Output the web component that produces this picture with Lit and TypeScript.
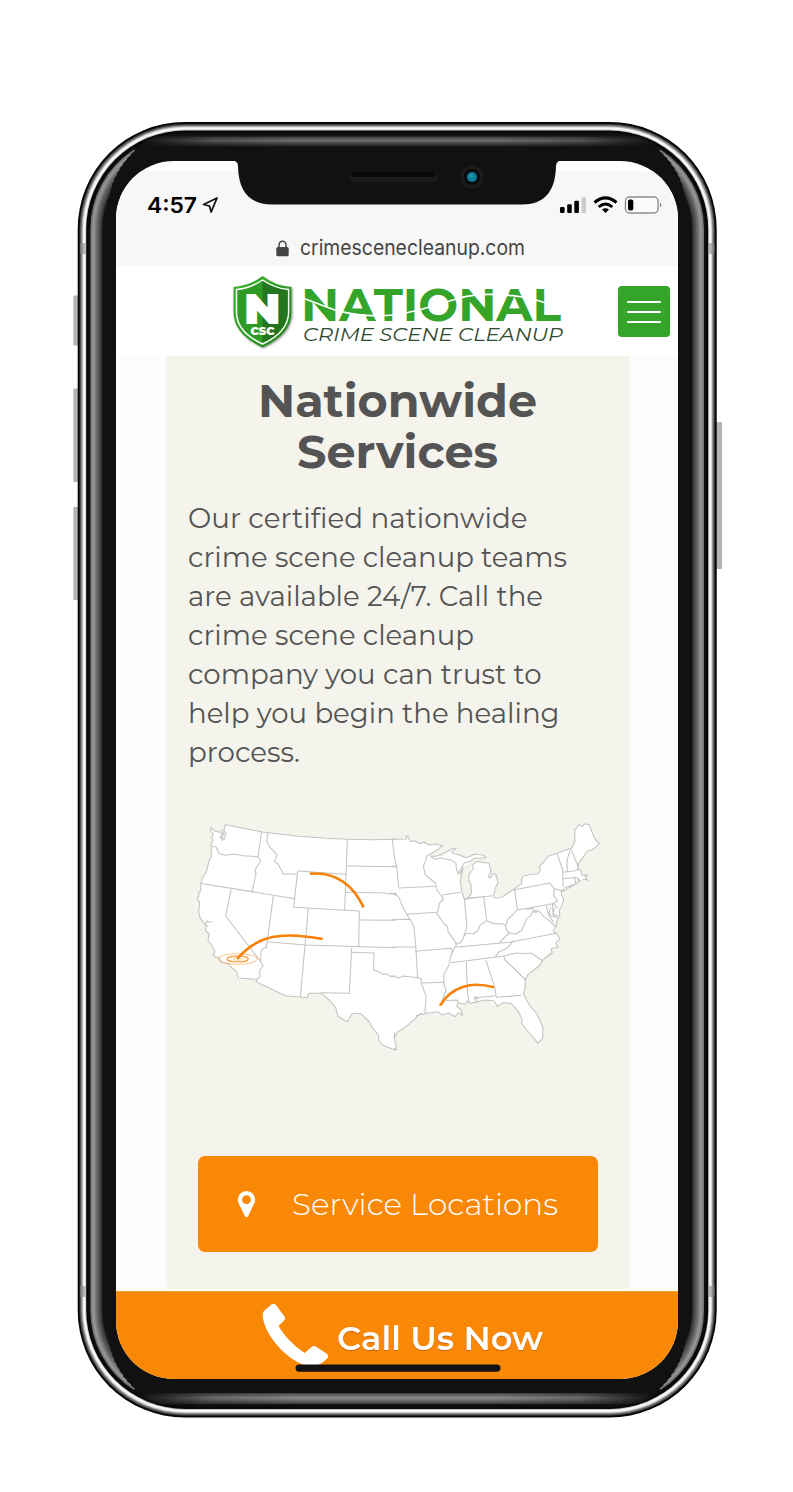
import { LitElement, html, svg, css } from "lit";
import { customElement, property } from "lit/decorators.js";

/** One line of real text, fitted to a given measure. */
@customElement("fit-text")
class FitText extends LitElement {
  @property() text = "";
  @property({ type: Number }) measure = 100;
  @property({ type: Number }) line = 20;
  @property({ type: Number }) base = 16;
  static styles = css`
    :host { display: block; font-variant-ligatures: none; }
    svg { display: block; overflow: visible; }
    text { fill: currentColor; }
  `;
  render() {
    return html`<svg width=${this.measure} height=${this.line}>
      <text x="0" y=${this.base} textLength=${this.measure} lengthAdjust="spacingAndGlyphs">${this.text}</text>
    </svg>`;
  }
}

const ring = (inset: number, color: string) => {
  const r = 107 - inset * 0.96;
  return svg`<rect x=${77.7 + inset} y=${122 + inset} width=${639 - inset * 2} height=${1295.5 - inset * 2} rx=${r} ry=${r} fill=${color}></rect>`;
};

const bezel: [number, string][] = [
  [0, "#050505"], [1.7, "#333"], [2.7, "#6a6a6a"], [3.8, "#999"], [4.8, "#ddd"], [5.8, "#fafafa"],
  [7.6, "#c8c8c8"], [8.5, "#080808"], [11, "#111"],
];
// Highlights on the glass edge, from the inside outwards.
const glow: [number, string][] = [
  [24, "#222"], [23, "#3b3b3b"], [21.8, "#494949"], [20.6, "#585858"], [19.4, "#666"],
  [18.2, "#747474"], [17, "#858585"], [15.8, "#939393"], [14.6, "#999"], [13.6, "#777"],
];
const sideGlow = (d: number, c: string) => {
  const R = 107 - d;
  const a = ((57 - (d - 13.6) * 3.2) * Math.PI) / 180;
  const dx = R * Math.cos(a), dy = R * Math.sin(a);
  const l = 77.7 + d, r = 716.7 - d;
  const cl = 184.7, cr = 609.7, ct = 229, cb = 1310.5;
  return svg`<path d="M${cl - dx} ${ct - dy} A${R} ${R} 0 0 0 ${l} ${ct} V${cb} A${R} ${R} 0 0 0 ${cl - dx} ${cb + dy}
    M${cr + dx} ${ct - dy} A${R} ${R} 0 0 1 ${r} ${ct} V${cb} A${R} ${R} 0 0 1 ${cr + dx} ${cb + dy}" stroke=${c}></path>`;
};

const frame = svg`
  <g fill="#b5b5b5">
    <rect x="73.3" y="295.5" width="6" height="50" rx="1"></rect>
    <rect x="73.3" y="388.5" width="6" height="93.5" rx="1"></rect>
    <rect x="73.3" y="507" width="6" height="93" rx="1"></rect>
    <rect x="716" y="422" width="6" height="147" rx="1"></rect>
  </g>
  ${bezel.map(([i, c]) => ring(i, c))}
  <g fill="#888" opacity=".6">
    <rect x="80" y="243" width="5.500" height="11"></rect><rect x="709" y="243" width="5.500" height="11"></rect>
    <rect x="80" y="1286" width="5.500" height="11"></rect><rect x="709" y="1286" width="5.500" height="11"></rect>
  </g>
  <rect x="140" y="136.500" width="514" height="10" fill="url(#top)" mask="url(#ends)"></rect>
  <rect x="140" y="1393" width="514" height="11" fill="url(#bottom)" mask="url(#ends)"></rect>
  <g fill="none" stroke-width="1.800" stroke-linecap="round">${glow.map(([d, c]) => sideGlow(d, c))}</g>
`;

const westFill = "M75 52 L95 68 110 71 107 84 114 89 120 72 114 60 118 44 230 66 330 78 420 85 484 88 560 89 628 87 628 720 605 712 588 704 578 690 577 674 562 658 550 636 527 613 498 612 492 622 484 635 456 619 449 592 430 570 406 550 368 550 364 563 298 557 210 515 213 508 157 504 152 485 130 463 108 458 100 443 86 440 87 424 66 390 69 372 57 360 58 344 43 326 38 304 41 280 33 262 42 246 44 220 62 184 76 140 78 95Z";
const westLines = [
  "M75 52 L88 64 103 67 111 72 107 83 114 89 120 72 114 60 118 44 230 66 330 78 420 85 484 88 560 89 630 88",
  "M75 52 L73 62 82 72 77 84 81 91 75 105 76 140 68 155 62 184 49 205 44 220 45 235 42 246 37 251 39 259 33 262 41 280 38 304 43 326 58 344 60 352 57 360 69 372 66 390 74 402 87 424 82 434 86 440 100 443 108 458 119 459 130 463 137 474 152 485 157 504 213 508 210 515 298 557 364 563 368 550 406 550 430 570 449 592 456 619 484 635 492 622 498 612 510 610 527 613 550 636 562 658 577 674 578 690 588 704 605 712 630 721",
  "M76 109 L90 111 100 131 118 136 145 132 170 137 216 140",
  "M227 65 L216 140 224 153 207 181 210 192 198 247",
  "M44 220 L326 266",
  "M135 238 L119 318 224 455",
  "M262 258 L241 412 230 416 225 426 224 455 231 467 220 484 222 499 213 508",
  "M246 68 L242 94 253 113 273 134 265 155 276 162 293 193 316 191 332 194",
  "M335 183 L323 292 520 303", "M335 183 L480 193", "M484 88 L478 246 476 301",
  "M484 168 L630 170", "M478 247 L598 249 607 253 615 249 630 254",
  "M367 296 L343 561", "M244 395 L359 405 630 413", "M520 303 L518 412", "M520 330 L630 331",
  "M497 413 L490 550 404 548", "M496 427 L564 429 563 479 580 486 590 493 602 491 612 499 630 498",
  "M66 332 L57 340 65 350 M60 337 L80 335", "M106 58 L113 70 101 83 M102 79 L110 92", "M626 665 L624 687",
];
const eastFill = "M0 88 L45 87 49 78 58 94 90 98 112 104 155 107 118 135 130 142 155 137 184 117 193 117 188 130 221 145 262 130 285 141 239 153 208 178 206 193 211 175 208 248 220 268 240 260 240 225 232 205 240 175 256 154 294 160 300 186 291 202 306 191 321 218 307 260 330 263 365 240 392 220 397 198 440 192 448 180 447 167 472 139 543 113 554 93 552 60 564 44 594 44 607 80 625 100 600 121 578 140 563 160 568 184 575 199 590 208 568 212 525 240 516 245 516 285 505 300 499 330 490 345 497 370 505 388 493 414 470 430 450 453 411 493 401 510 398 545 405 568 436 612 456 652 455 685 440 698 407 660 390 637 388 605 360 580 335 578 320 589 295 573 258 572 235 580 210 580 197 590 209 605 197 619 175 609 153 615 105 610 70 628 45 650 20 666 10 684 17 718 0 715Z";
const eastLines = [
  "M0 88 L46 87 46 78 51 80 58 94 72 93 88 101 99 96 115 105 132 102 155 107 139 120 107 139 105 151 97 168 103 195 133 219 138 240 158 267 145 280 142 299 137 310 160 342 170 351 171 364 193 397 196 405 181 431 174 465 159 493 158 519 165 540 153 573",
  "M118 138 L134 139 154 132 184 116 194 116 182 128 190 131 204 134 226 143 253 132 278 136 285 142 268 145 252 144 239 153 220 158 207 181 203 193 196 177 195 160 182 151 148 144 132 148 118 138",
  "M206 193 L216 173 208 211 212 242 220 268 232 263 242 248 240 225 232 208 235 192 246 177 246 163 256 154 294 160 298 175 300 186 291 202 298 203 306 191 315 193 321 218 313 234 307 260 316 264 330 263 365 240 392 220 391 207 397 198 422 193 440 192 448 180 445 169 455 159 472 139 498 130 543 113 552 93 551 61 564 44 574 49 581 41 594 44 607 76 614 90 625 100 615 111 600 121 588 124 578 140 562 160 560 179 570 182 572 195 584 194 588 208 573 209",
  "M568 211 L558 219 525 239 511 246 520 234 550 223",
  "M510 242 L512 256 518 267 512 287 504 302 507 315 498 333 496 348 486 364 497 370 507 388 494 398 501 412 480 416 484 429 459 447 445 468 411 493 402 511 404 531 397 550 405 568 421 593 438 612 456 652 455 685 440 700 430 686 407 660 391 639 394 628 378 600 360 580 335 578 320 589 307 572 280 570 258 576 251 568 253 560 261 569",
  "M260 576 L235 580 229 573 222 582 202 579 197 590 211 600 215 616 202 609 192 620 172 609 153 615 140 606 105 610 84 615 70 628 45 650 20 666 10 684 17 718 M93 610 L75 618 M17 718 L10 716 14 721",
  "M4 88 L10 140 18 175 23 233 M0 168 L17 168", "M24 234 L134 229", "M0 249 L22 259 35 290 47 313 137 307 M0 252 L18 250",
  "M47 313 L58 331", "M0 329 L57 328 69 350 75 418 M0 411 L75 411", "M73 424 L180 415 186 430", "M75 418 L80 503 91 506 91 519 105 559 102 610",
  "M0 498 L24 503 39 498 80 503", "M92 519 L160 517", "M157 572 L200 570 202 580",
  "M154 255 L208 247", "M220 268 L228 349 218 381 209 399 195 399", "M220 268 L278 260 M235 264 L304 257",
  "M278 260 L287 332 268 345 261 360 247 372 228 370 218 379", "M287 332 L308 341 333 341 344 346 350 329 370 310 379 296 371 239",
  "M344 346 L347 361 355 369 325 398", "M355 369 L374 372 393 360 407 326 419 317 426 304 442 302 M407 299 L424 295 430 307 442 305",
  "M371 239 L476 219 490 236 513 242 M379 300 L486 281 502 295", "M490 236 L488 257 500 273 486 281",
  "M442 302 L450 310 459 320",
  "M196 411 L225 409 355 397 496 370", "M367 392 L350 413 323 427 313 440", "M180 458 L338 438 375 429 405 431 421 429 456 453",
  "M338 438 L342 450 380 486 404 510", "M284 449 L311 530 316 562 391 556 M250 564 L313 557", "M226 456 L229 538 234 579",
  "M498 130 L515 180 516 230 M515 187 L548 183 566 176 M515 207 L554 202 569 213", "M529 186 L528 151 537 121 M539 115 L562 171",
  "M551 201 L554 221 M562 203 L562 213", "M484 280 L487 321 502 316 M492 293 L486 308 499 325 M480 293 L474 308 482 321 M466 288 L474 318 489 337 M459 320 L475 332 493 350",
  "M583 207 L592 212 M590 194 L582 202",
];

const map = html`<svg class="map" viewBox="0 0 660 750" width="220" height="250">
  <g fill="#fff"><path d=${westFill}></path><path transform="translate(615)" d=${eastFill}></path></g>
  <g fill="none" stroke="#c3c3c2" stroke-width="3.200" stroke-linejoin="round">
    ${westLines.map((d) => svg`<path d=${d}></path>`)}
    <g transform="translate(615)">${eastLines.map((d) => svg`<path d=${d}></path>`)}</g>
  </g>
  <g fill="none" stroke="#f98806">
    <ellipse cx="155" cy="447" rx="59" ry="16" stroke-width="3" opacity=".45"></ellipse>
    <ellipse cx="155" cy="447" rx="32" ry="9" stroke-width="3.500" opacity=".85"></ellipse>
    <ellipse cx="155" cy="447" rx="14" ry="4" stroke-width="2.500" opacity=".5"></ellipse>
    <g stroke-width="7.600" stroke="#f98006">
      <path d="M371 191 C448 184 500 223 533 292"></path>
      <path d="M153 447 C216 374 288 364 410 387"></path>
      <path d="M762 587 C796 530 855 513 924 532"></path>
    </g>
  </g>
</svg>`;

const lines: [string, number][] = [
  ["Our certified nationwide", 339.5], ["crime scene cleanup teams", 379], ["are available 24/7. Call the", 355],
  ["crime scene cleanup", 286], ["company you can trust to", 353.5], ["help you begin the healing", 371.5], ["process.", 112],
];

@customElement("app-root")
class AppRoot extends LitElement {
  static styles = css`
    :host { display: block; position: relative; width: 793px; height: 1492px; background: #fff; overflow: hidden;
      font-family: Montserrat, Inter, "Open Sans", sans-serif; color: #545454; }
    svg { display: block; }
    .frame, .notch { position: absolute; left: 0; top: 0; pointer-events: none; }
    .screen { position: relative; box-sizing: border-box; margin: 160.5px 0 0 116px; width: 562px; height: 1218.5px;
      border-radius: 58px; overflow: hidden; background: #fff; display: flex; flex-direction: column; }
    .wrap { display: flow-root; }
    .browser { margin-top: 10px; height: 95.5px; background: #f7f7f7; flex: none; }
    .status { display: flex; align-items: center; height: 65px; padding: 3px 15px 0 31px; box-sizing: border-box; }
    .clock { color: #000; font: 600 22px Inter, sans-serif; }
    .arrow { margin-left: 5px; }
    .signals { margin-left: auto; }
    .address { display: flex; align-items: center; padding-left: 160px; gap: 11px; color: #454545; font: 400 21px Inter, sans-serif; }
    header { height: 90px; flex: none; display: flex; background: #fff; }
    .shield { margin: 8px 0 0 116px; }
    .brand { margin: 17px 0 0 8px; width: 262px; }
    .name { position: relative; height: 42px; }
    .name fit-text { color: #35a42b; font-size: 45.5px; font-weight: 700; margin-left: -2px; }
    .cut { position: absolute; left: 0; top: 0; }
    .tag { color: #304a32; font-size: 19.5px; font-style: italic; }
    .menu { margin: 20px 0 0 53px; width: 52px; height: 51px; border-radius: 4px; background: #35a42b; display: flex;
      flex-direction: column; align-items: center; justify-content: center; gap: 8px; padding: 0; border: 0; }
    .menu i { width: 34px; height: 2px; background: #fff; border-radius: 1px; }
    main { flex: 1; background: #fcfcfc; padding-left: 50px; }
    .card { width: 464px; height: 933px; box-sizing: border-box; background: #f4f4ed; border-radius: 0 0 6px 6px; }
    h2 { margin: 0; padding: 20px 1px 0 0; display: flex; flex-direction: column; align-items: center; font-size: 45px; font-weight: 700; }
    p { margin: 0; padding: 29.5px 0 0 22px; font-size: 28px; font-weight: 400; }
    .map { margin: 30.5px 0 0 19.5px; overflow: visible; }
    .cta { margin: 95.5px 0 0 32px; width: 400px; height: 96px; border-radius: 7px; background: #f98806; color: #fff;
      display: flex; align-items: center; box-sizing: border-box; padding-left: 39px; gap: 35.5px; font-size: 30px; font-weight: 300; }
    .cta fit-text { -webkit-text-stroke: 0.35px #fff; }
    .call { flex: none; height: 88px; box-sizing: border-box; background: #f98806; border-top: 1.5px solid #f3a21d; color: #fff;
      display: flex; padding: 11px 0 0 146px; gap: 6.5px; font-size: 33.5px; font-weight: 600; }
    .call fit-text { filter: drop-shadow(0.5px 1.5px 0.5px #b84d0099); }
  `;

  render() {
    return html`
      <svg class="frame" width="793" height="1492" viewBox="0 0 793 1492">
        <defs>
          <linearGradient id="top" x2="0" y2="1"><stop stop-color="#3c3c3c"></stop><stop offset=".4" stop-color="#6c6c6c"></stop><stop offset="1" stop-color="#1c1c1c"></stop></linearGradient>
          <linearGradient id="bottom" x2="0" y2="1"><stop stop-color="#444"></stop><stop offset=".45" stop-color="#8c8c8c"></stop><stop offset="1" stop-color="#3a3a3a"></stop></linearGradient>
          <linearGradient id="fade"><stop stop-color="#000"></stop><stop offset=".14" stop-color="#bbb"></stop><stop offset=".3" stop-color="#fff"></stop><stop offset=".7" stop-color="#fff"></stop><stop offset=".86" stop-color="#bbb"></stop><stop offset="1" stop-color="#000"></stop></linearGradient>
          <mask id="ends" maskUnits="userSpaceOnUse" x="0" y="0" width="793" height="1492"><rect x="140" y="0" width="514" height="1492" fill="url(#fade)"></rect></mask>
        </defs>
        ${frame}
      </svg>
      <div class="wrap"><div class="screen">
        <div class="browser">
          <div class="status">
            <fit-text class="clock" text="4:57" measure="50" line="24" base="20"></fit-text>
            <svg class="arrow" width="17" height="18" viewBox="0 0 17 18"><path d="M15 2 L1.500 8.500 7.500 10 9.200 16Z" fill="none" stroke="#111" stroke-width="1.800" stroke-linejoin="round"></path></svg>
            <svg class="signals" width="104" height="20" viewBox="0 0 104 20">
              <rect x="1" y="12" width="4.600" height="6" rx="1.200"></rect><rect x="8.200" y="9.300" width="4.600" height="8.700" rx="1.200"></rect>
              <rect x="15.300" y="5.700" width="4.600" height="12.300" rx="1.200"></rect><rect x="22.500" y="2.300" width="4.600" height="15.700" rx="1.200" fill="#ccc"></rect>
              <g fill="none" stroke="#000" stroke-width="3"><path d="M35.500 7.500 Q46.500 -1.800 57.500 7.500"></path><path d="M39.700 12 Q46.500 6 53.300 12"></path></g>
              <path d="M43 14.500 Q46.500 11.800 50 14.500 L46.500 18Z"></path>
              <rect x="66.500" y="2" width="32.500" height="16" rx="4" fill="#fbfbfb" stroke="#8d8d8d" stroke-width="1.400"></rect>
              <rect x="69" y="4.500" width="5.300" height="11" rx="1.700"></rect><path d="M101 7.500 q2.600 2.500 0 5z" fill="#777"></path>
            </svg>
          </div>
          <div class="address">
            <svg width="13" height="17" viewBox="0 0 13 17"><path d="M3 8 V5 a3.500 3.800 0 0 1 7 0 V8" fill="none" stroke="#454545" stroke-width="1.500"></path><rect x="0.300" y="7" width="12.400" height="9.300" rx="1.600" fill="#454545"></rect></svg>
            <fit-text text="crimescenecleanup.com" measure="225" line="26" base="19"></fit-text>
          </div>
        </div>
        <header>
          <svg class="shield" width="63" height="76" viewBox="0 0 63 76">
            <defs><linearGradient id="leaf" x2="1" y2="1"><stop stop-color="#3cb52f"></stop><stop offset="1" stop-color="#23851c"></stop></linearGradient></defs>
            <path d="M30.500 2 Q43 12 59.500 13 V38 Q60 60 30.500 73.500 Q1.500 60 1.500 38 V13 Q18 12 30.500 2Z" fill="url(#leaf)" filter="drop-shadow(1.500px 1.500px 1px #5559)"></path>
            <path d="M30.500 6 Q43 14.500 56.500 15.500 V38 Q56.500 58 30.500 70 Q4.500 58 4.500 38 V15.500 Q18 14.500 30.500 6Z" fill="#2f9b27" stroke="#fff" stroke-width="1.500"></path>
            <path d="M30.500 7 Q43 15.300 55.700 16.200 V38 Q55.500 57.500 30.500 69Z" fill="#23761f"></path>
            <text x="11.700" y="50" textLength="37" lengthAdjust="spacingAndGlyphs" font-size="43" font-weight="900" fill="#fff">N</text>
            <text x="18.500" y="60.700" textLength="24" lengthAdjust="spacingAndGlyphs" font-size="10.500" font-weight="900" fill="#fff">CSC</text>
          </svg>
          <div class="brand">
            <div class="name">
              <fit-text text="NATIONAL" measure="260" line="42" base="37.700"></fit-text>
              <svg class="cut" width="262" height="42" viewBox="0 0 262 42"><path d="M0 15 L3 16.300 33.700 27.700 C50 31.500 60 32.700 70 32.700 S85 32.700 90 32 S108 29 117 26.700 L150 17 Q164 12.500 177 11.700 T210 12.700 L226 15 243 20" fill="none" stroke="#fff" stroke-width="1.700"></path></svg>
            </div>
            <fit-text class="tag" text="CRIME SCENE CLEANUP" measure="260" line="20" base="16"></fit-text>
          </div>
          <button class="menu" aria-label="Menu"><i></i><i></i><i></i></button>
        </header>
        <main><section class="card">
          <h2>
            <fit-text text="Nationwide" measure="279" line="50.500" base="41"></fit-text>
            <fit-text text="Services" measure="201" line="50.500" base="40.500"></fit-text>
          </h2>
          <p>${lines.map(([t, w]) => html`<fit-text .text=${t} .measure=${w} line="39" base="20.500"></fit-text>`)}</p>
          ${map}
          <div class="cta">
            <svg width="19" height="28" viewBox="0 0 19 28"><path fill-rule="evenodd" d="M9.500 1 A8.700 8.700 0 0 0 .8 9.700 C.8 12 2 14 3 16 L7.800 26 Q9.500 28.400 11.200 26 L16 16 C17 14 18.200 12 18.200 9.700 A8.700 8.700 0 0 0 9.500 1Z M9.500 5.300 A4.400 4.400 0 1 1 9.500 14.100 A4.400 4.400 0 1 1 9.500 5.300Z" fill="#fff"></path></svg>
            <fit-text text="Service Locations" measure="266" line="30" base="25.500"></fit-text>
          </div>
        </section></main>
        <div class="call">
          <svg width="68" height="64" viewBox="0 0 68 64"><path d="M8.500 2.300 Q11.500 -.5 14 2 L22.500 13.500 Q24 15.500 22 17.500 L16.500 23 Q25 38 42.500 50 L49 44.500 Q52 42 54.500 44 L64.500 50.500 Q67.500 53 65 55.500 Q56 65.500 44 62.500 C25 57 4 34 .8 14.500 Q.2 9.500 2 8Z" fill="#fff"></path></svg>
          <fit-text text="Call Us Now" measure="206" line="60" base="47"></fit-text>
        </div>
      </div></div>
      <svg class="notch" width="793" height="1492" viewBox="0 0 793 1492">
        <path d="M228 156 V160.500 H232.500 Q237.500 160.500 238 166 C238.500 192 250 204.500 272 204.500 H522 C544 204.500 555.500 192 556 166 Q556.500 160.500 561.500 160.500 H566 V156Z" fill="#111"></path>
        <rect x="349" y="171.500" width="89" height="10.500" rx="5.250" fill="#1b1b1b"></rect><rect x="351" y="172" width="85" height="5" rx="2.500" fill="#0a0a0a"></rect>
        <circle cx="472" cy="177" r="12" fill="#1b1b1b"></circle><circle cx="472" cy="177" r="8" fill="#070b0c"></circle><circle cx="472" cy="177" r="5" fill="#0e7f98"></circle><circle cx="471" cy="176" r="2" fill="#2194ad"></circle>
        <rect x="295.500" y="1364.500" width="205" height="7.200" rx="3.600" fill="#121212"></rect>
      </svg>
    `;
  }
}
